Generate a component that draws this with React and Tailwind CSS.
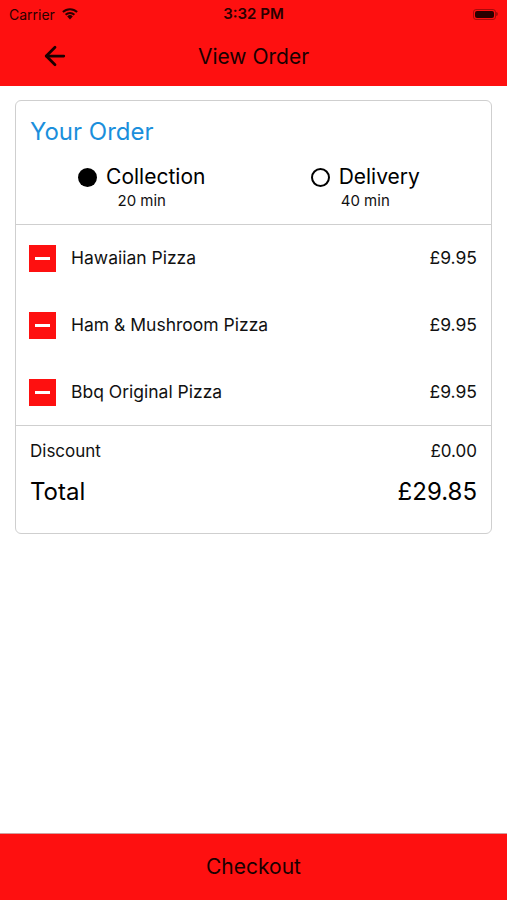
import { ArrowLeft } from 'lucide-react'

const items = [
  { name: 'Hawaiian Pizza', price: '£9.95' },
  { name: 'Ham & Mushroom Pizza', price: '£9.95' },
  { name: 'Bbq Original Pizza', price: '£9.95' },
]

function StatusBar() {
  return (
    <div className="h-[28px] flex items-center justify-between px-[9px] text-[#2a0000]">
      <div className="flex items-center gap-[6px] w-[120px]">
        <span className="text-[14px]">Carrier</span>
        <svg width="18" height="13" viewBox="0 0 18 13" className="mt-[-1px]">
          <path d="M9 12.5 L6.2 9.4 A4 4 0 0 1 11.8 9.4 Z" fill="#2a0000" />
          <path d="M3.9 7.1 A7.3 7.3 0 0 1 14.1 7.1 L12.7 8.6 A5.3 5.3 0 0 0 5.3 8.6 Z" fill="#2a0000" />
          <path d="M1.2 4.3 A11.2 11.2 0 0 1 16.8 4.3 L15.4 5.8 A9.2 9.2 0 0 0 2.6 5.8 Z" fill="#2a0000" />
        </svg>
      </div>
      <span className="text-[15px] font-semibold">3:32 PM</span>
      <div className="w-[120px] flex justify-end">
        <div className="flex items-center">
          <div className="w-[23px] h-[11px] rounded-[3px] border border-[#2a0000]/40 p-[1px]">
            <div className="w-full h-full rounded-[2px] bg-[#2a0000]" />
          </div>
          <div className="w-[1.5px] h-[4px] bg-[#2a0000]/40 rounded-r" />
        </div>
      </div>
    </div>
  )
}

export default function App() {
  return (
    <div className="h-[900px] w-[507px] flex flex-col bg-white" style={{ fontFamily: 'Inter, "Noto Sans", sans-serif' }}>
      <div className="bg-[#fe1010] h-[86px] flex flex-col">
        <StatusBar />
        <div className="flex-1 relative flex items-center justify-center">
          <ArrowLeft className="absolute left-[40px] top-[13px] text-[#1a0000]" size={30} strokeWidth={2.2} />
          <span className="text-[21px] text-[#1a0000]">View Order</span>
        </div>
      </div>

      <div className="flex-1 px-[15px] pt-[14px]">
        <div className="border border-[#cfcfcf] rounded-[6px]">
          <div className="px-[14px] pt-[14px] pb-[12px]">
            <div className="text-[24px] leading-[34px] text-[#1b8fdc]">Your Order</div>
            <div className="flex mt-[15px]">
              <div className="flex-1 flex flex-col items-center">
                <div className="flex items-center gap-[9px]">
                  <div className="w-[19px] h-[19px] rounded-full bg-black" />
                  <span className="text-[21px] leading-[26px] text-black">Collection</span>
                </div>
                <span className="text-[15px] leading-[22px] text-[#111]">20 min</span>
              </div>
              <div className="flex-1 flex flex-col items-center">
                <div className="flex items-center gap-[9px]">
                  <div className="w-[19px] h-[19px] rounded-full border-[2px] border-black" />
                  <span className="text-[21px] leading-[26px] text-black">Delivery</span>
                </div>
                <span className="text-[15px] leading-[22px] text-[#111]">40 min</span>
              </div>
            </div>
          </div>

          <div className="border-t border-[#cfcfcf] pt-[20px] pb-[19px] flex flex-col gap-[40px]">
            {items.map(item => (
              <div key={item.name} className="flex items-center px-[13px] h-[27px]">
                <div className="w-[27px] h-[27px] bg-[#fe1010] flex items-center justify-center">
                  <div className="w-[15px] h-[3px] bg-white" />
                </div>
                <span className="ml-[15px] text-[17.5px] text-[#111] flex-1">{item.name}</span>
                <span className="text-[17.5px] text-[#111] pr-[1px]">{item.price}</span>
              </div>
            ))}
          </div>

          <div className="border-t border-[#cfcfcf] px-[14px] pt-[14px] pb-[26px]">
            <div className="flex justify-between text-[17px] leading-[22px] text-[#111]">
              <span>Discount</span>
              <span>£0.00</span>
            </div>
            <div className="flex justify-between text-[24px] leading-[30px] text-black mt-[15px]">
              <span>Total</span>
              <span>£29.85</span>
            </div>
          </div>
        </div>
      </div>

      <div className="h-[67px] bg-[#fe1010] border-t border-[#d0a0a0] flex items-center justify-center">
        <span className="text-[21px] text-[#1a0000]">Checkout</span>
      </div>
    </div>
  )
}
